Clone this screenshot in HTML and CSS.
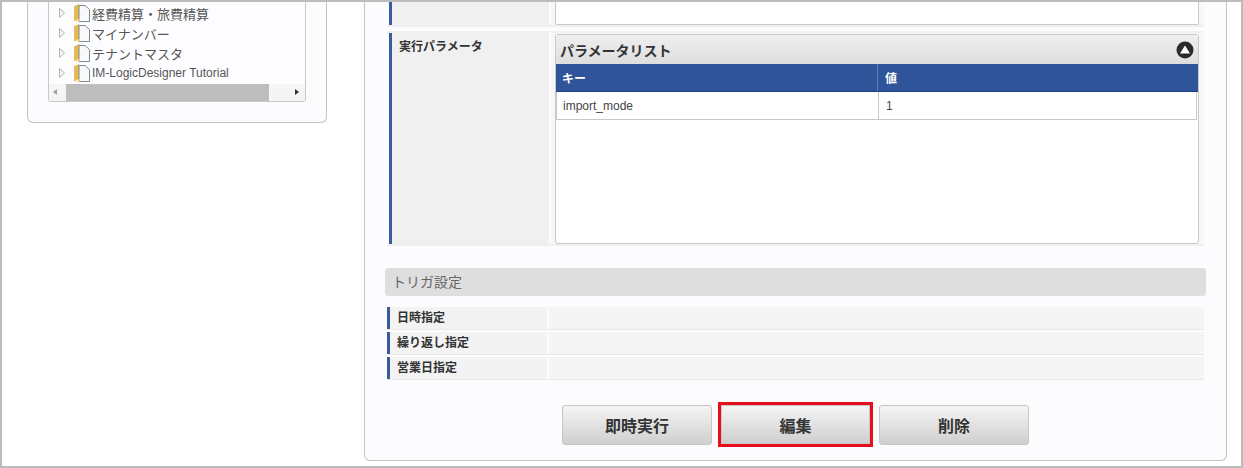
FILE: index.html
```html
<!DOCTYPE html>
<html lang="ja">
<head>
  <meta charset="UTF-8">
  <title>ジョブネット詳細</title>
  <link rel="stylesheet" href="styles.css">
</head>
<body>
  <svg class="defs" width="0" height="0">
    <symbol id="tree-arrow" viewBox="0 0 8 12">
      <path d="M1.5 1.5 L6.5 6 L1.5 10.5 Z" fill="#f4f4f4" stroke="#b4b4b4"/>
    </symbol>
    <symbol id="tree-folder" viewBox="0 0 16 18">
      <path d="M0.5 2.5 L5 0.5 L5 14 L0.5 17 Z" fill="#e8b94e" stroke="#d9a63a" stroke-width="0.6"/>
      <path d="M5 1.5 L11 1.5 L15.5 5.5 L15.5 17.5 L5 17.5 Z" fill="#f7f9fb" stroke="#7d8b92"/>
      <path d="M2 17.5 L6 14.5 L6 17.5 Z" fill="#f0cd78"/>
    </symbol>
  </svg>

  <div class="frame">
    <!-- Left tree panel -->
    <aside class="side-panel">
      <div class="tree-box">
        <ul class="tree">
          <li class="tree-row"><svg class="arrow"><use href="#tree-arrow"/></svg><svg class="folder"><use href="#tree-folder"/></svg>経費精算・旅費精算</li>
          <li class="tree-row"><svg class="arrow"><use href="#tree-arrow"/></svg><svg class="folder"><use href="#tree-folder"/></svg>マイナンバー</li>
          <li class="tree-row"><svg class="arrow"><use href="#tree-arrow"/></svg><svg class="folder"><use href="#tree-folder"/></svg>テナントマスタ</li>
          <li class="tree-row small"><svg class="arrow"><use href="#tree-arrow"/></svg><svg class="folder"><use href="#tree-folder"/></svg>IM-LogicDesigner Tutorial</li>
        </ul>
        <div class="scrollbar">
          <span class="scroll-btn left"></span>
          <span class="scroll-track"><span class="scroll-thumb"></span></span>
          <span class="scroll-btn right"></span>
        </div>
      </div>
    </aside>

    <!-- Detail panel -->
    <main class="main-panel">
      <div class="form-row first">
        <div class="form-label"></div>
        <div class="form-value"><div class="blank-box"></div></div>
      </div>
      <div class="form-row params">
        <div class="form-label"><span>実行パラメータ</span></div>
        <div class="form-value">
          <div class="param-box">
            <div class="param-title">
              <span>パラメータリスト</span>
              <svg class="collapse" width="18" height="18" viewBox="0 0 18 18">
                <circle cx="9" cy="9" r="8.5" fill="#2b2b2b"/>
                <path d="M9 4.5 L14 12.5 L4 12.5 Z" fill="#fff"/>
              </svg>
            </div>
            <div class="param-head">
              <div class="col-key">キー</div>
              <div class="col-val">値</div>
            </div>
            <div class="param-data">
              <div class="col-key">import_mode</div>
              <div class="col-val">1</div>
            </div>
          </div>
        </div>
      </div>

      <h2 class="section-title">トリガ設定</h2>

      <div class="trigger-list">
        <div class="trigger-row"><div class="trigger-label">日時指定</div><div class="trigger-value"></div></div>
        <div class="trigger-row"><div class="trigger-label">繰り返し指定</div><div class="trigger-value"></div></div>
        <div class="trigger-row"><div class="trigger-label">営業日指定</div><div class="trigger-value"></div></div>
      </div>

      <div class="actions">
        <button class="btn">即時実行</button>
        <span class="highlight"><button class="btn">編集</button></span>
        <button class="btn">削除</button>
      </div>
    </main>
  </div>
</body>
</html>
```

FILE: styles.css
```css
* {
  box-sizing: border-box;
}

html, body {
  margin: 0;
  height: 468px;
  overflow: hidden;
  background: #fff;
}

body {
  font-family: "Liberation Sans", "Noto Sans CJK JP", sans-serif;
  font-size: 13px;
  color: #333;
}

.defs {
  position: absolute;
}

.frame {
  display: flex;
  align-items: flex-start;
  height: 468px;
  padding-left: 25px;
  border: 2px solid #bcbcbc;
}

/* Left panel */
.side-panel {
  width: 300px;
  height: 121px;
  padding: 0 20px;
  background: #fcfcfe;
  border: 1px solid #c4c4c4;
  border-top: none;
  border-radius: 0 0 6px 6px;
}

.tree-box {
  width: 258px;
  height: 100px;
  background: #fdfdff;
  border: 1px solid #c8c8c8;
  border-top: none;
  border-radius: 0 0 3px 3px;
  display: flex;
  flex-direction: column;
  justify-content: flex-end;
}

.tree {
  list-style: none;
  margin: 0;
  padding: 0 0 1px 9px;
}

.tree-row {
  display: flex;
  align-items: center;
  height: 20px;
  color: #555;
  font-size: 13px;
  white-space: nowrap;
}

.tree-row.small {
  font-size: 12px;
}

.arrow {
  width: 8px;
  height: 12px;
  margin-right: 8px;
}

.folder {
  width: 16px;
  height: 18px;
  margin-right: 2px;
}

.scrollbar {
  display: flex;
  align-items: center;
  height: 17px;
  background: #f5f5f5;
}

.scroll-btn {
  width: 17px;
  height: 17px;
  flex: none;
  position: relative;
}

.scroll-btn::after {
  content: "";
  position: absolute;
  top: 5px;
  border-top: 3.5px solid transparent;
  border-bottom: 3.5px solid transparent;
}

.scroll-btn.left::after {
  left: 4px;
  border-right: 4px solid #a0a0a0;
}

.scroll-btn.right::after {
  left: 7px;
  border-left: 4px solid #333;
}

.scroll-track {
  flex: 1;
  height: 100%;
}

.scroll-thumb {
  display: block;
  width: 203px;
  height: 100%;
  background: #bdbdbd;
}

/* Right panel */
.main-panel {
  width: 863px;
  height: 459px;
  margin-left: 37px;
  padding: 0 20px 0 20px;
  background: #fcfcfe;
  border: 1px solid #c4c4c4;
  border-top: none;
  border-radius: 0 0 6px 6px;
}

.form-row {
  display: flex;
  margin: 0 2px;
  gap: 2px;
  border-bottom: 2px solid #f0f0f0;
}

.form-row.first {
  height: 25px;
  margin-bottom: 4px;
}

.form-row.params {
  height: 215px;
  border-top: 2px solid #f0f0f0;
}

.form-label {
  width: 160px;
  flex: none;
  background: #f0f0f0;
  border-left: 3px solid #3c5a9e;
  margin-left: 2px;
  padding: 4px 7px;
  font-weight: bold;
  font-size: 12px;
  color: #333;
}

.form-value {
  flex: 1;
  background: #f7f7f7;
  padding: 0 5px 0 4px;
}

.blank-box {
  height: 23px;
  background: #fff;
  border: 1px solid #c8c8c8;
  border-top: none;
  border-radius: 0 0 2px 2px;
}

.param-box {
  height: 210px;
  margin-top: 1px;
  background: #fff;
  border: 1px solid #c8c8c8;
  border-radius: 3px;
}

.param-title {
  display: flex;
  align-items: center;
  justify-content: space-between;
  height: 29px;
  padding: 0 4px 0 4px;
  background: linear-gradient(#efefef, #dedede);
  font-size: 14px;
  font-weight: bold;
  color: #333;
}

.param-head {
  display: flex;
  height: 28px;
  align-items: center;
  background: #30549a;
  border-bottom: 1px solid #223f79;
  color: #fff;
  font-weight: bold;
  font-size: 12px;
}

.param-data {
  display: flex;
  align-items: center;
  height: 28px;
  margin-right: 1px;
  border: 1px solid #c8c8c8;
  border-top: none;
  font-size: 12px;
  color: #444;
}

.col-key {
  width: 321px;
  padding-left: 6px;
  flex: none;
}

.col-val {
  padding-left: 7px;
}

.param-head .col-val {
  align-self: stretch;
  display: flex;
  align-items: center;
  border-left: 1px solid #5f7bb3;
}

.param-data .col-val {
  align-self: stretch;
  display: flex;
  align-items: center;
  border-left: 1px solid #c8c8c8;
}

.section-title {
  margin: 22px 0 11px;
  height: 28px;
  padding: 0 7px;
  line-height: 28px;
  background: #dedede;
  border-radius: 3px;
  font-size: 14px;
  font-weight: normal;
  color: #666;
}

.trigger-list {
  display: flex;
  flex-direction: column;
  gap: 2px;
  margin: 0 2px 0 2px;
}

.trigger-row {
  display: flex;
  height: 23px;
  gap: 2px;
  border-bottom: 1px solid #e8e8e8;
}

.trigger-label {
  width: 160px;
  flex: none;
  margin: 0;
  padding-left: 7px;
  line-height: 22px;
  background: linear-gradient(to right, #f3f3f3, #f3f3f3) no-repeat;
  border-left: 3px solid #3c5a9e;
  margin-left: 0;
  font-size: 12px;
  font-weight: bold;
  color: #333;
}

.trigger-value {
  flex: 1;
  background: #f5f5f5;
}

.actions {
  display: flex;
  justify-content: center;
  align-items: center;
  margin-top: 22px;
  gap: 6px;
}

.btn {
  width: 150px;
  height: 40px;
  padding: 0;
  background: linear-gradient(#f5f5f5, #cfcfcf);
  border: 1px solid #c6c6c6;
  border-radius: 3px;
  font-family: inherit;
  font-size: 16px;
  font-weight: bold;
  color: #333;
}

.highlight {
  display: flex;
  border: 3px solid #e60f1e;
}

.highlight .btn {
  width: 149px;
  height: 39px;
  border-radius: 0;
}
```
